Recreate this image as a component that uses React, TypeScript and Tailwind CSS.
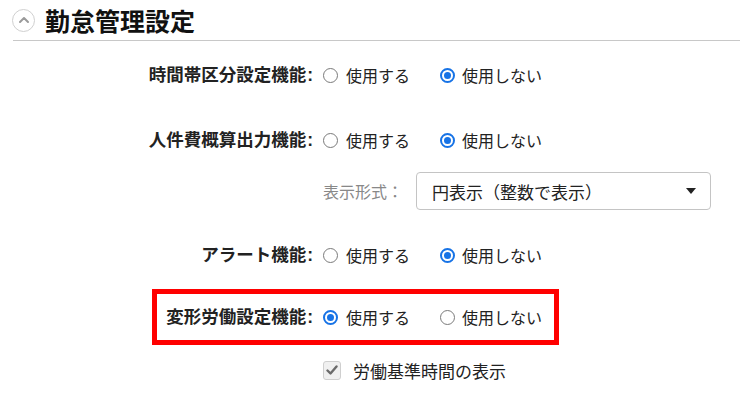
import React from "react";

const font = { fontFamily: '"Noto Sans CJK JP", "Noto Sans", sans-serif' };

function Radio({ checked }: { checked: boolean }) {
  return checked ? (
    <span className="w-[15px] h-[15px] rounded-full border-[2px] border-[#1773e6] bg-white flex items-center justify-center shrink-0">
      <span className="w-[7px] h-[7px] rounded-full bg-[#1773e6]" />
    </span>
  ) : (
    <span className="w-[15px] h-[15px] rounded-full border border-[#7a7a7a] bg-white shrink-0" />
  );
}

function RadioRow({ label, on }: { label: string; on: boolean }) {
  return (
    <div className="flex items-center h-[24px]">
      <div className="w-[313px] text-right text-[17.5px] font-bold text-[#222] leading-none">
        {label}
        <span className="ml-[1px] font-['Liberation_Sans',sans-serif]">:</span>
      </div>
      <div className="flex items-center ml-[10px] w-[117px]">
        <Radio checked={on} />
        <span className="ml-[8px] text-[16px] text-[#222] leading-none">使用する</span>
      </div>
      <div className="flex items-center">
        <Radio checked={!on} />
        <span className="ml-[7px] text-[16px] text-[#222] leading-none">使用しない</span>
      </div>
    </div>
  );
}

export default function App() {
  return (
    <div className="w-[740px] h-[406px] bg-white relative overflow-hidden" style={font}>
      <div className="ml-[13px] h-[41px] border-b border-[#c8c8c8] flex items-center">
        <span className="w-[23px] h-[23px] rounded-full border-[1.5px] border-[#d0d0d0] flex items-center justify-center -ml-[1px]">
          <svg width="12" height="8" viewBox="0 0 12 8">
            <path d="M2 6 L6 2 L10 6" fill="none" stroke="#9a9a9a" strokeWidth="2" strokeLinecap="round" strokeLinejoin="round" />
          </svg>
        </span>
        <span className="ml-[10px] text-[25px] font-bold text-[#111] leading-none">勤怠管理設定</span>
      </div>

      <div className="mt-[22px]">
        <RadioRow label="時間帯区分設定機能" on={false} />
      </div>
      <div className="mt-[41px]">
        <RadioRow label="人件費概算出力機能" on={false} />
      </div>
      <div className="mt-[20px] flex items-center h-[38px]">
        <div className="ml-[323px] text-[16px] text-[#888] leading-none">表示形式：</div>
        <div className="ml-[13px] w-[295px] h-[38px] border border-[#c4c4c4] rounded-[4px] flex items-center justify-between pl-[15px] pr-[14px]">
          <span className="text-[17px] text-[#222] leading-none">円表示（整数で表示）</span>
          <svg width="10" height="6" viewBox="0 0 10 6">
            <path d="M0 0 L10 0 L5 6 Z" fill="#222" />
          </svg>
        </div>
      </div>
      <div className="mt-[33px]">
        <RadioRow label="アラート機能" on={false} />
      </div>
      <div className="mt-[38px]">
        <RadioRow label="変形労働設定機能" on={true} />
      </div>
      <div className="mt-[29px] flex items-center h-[24px] ml-[323px]">
        <span className="w-[18px] h-[19px] rounded-[3px] border border-[#cfcfcf] bg-[#f0f0f0] flex items-center justify-center">
          <svg width="12" height="10" viewBox="0 0 12 10">
            <path d="M1.5 5.5 L4.5 8.5 L10.5 1.5" fill="none" stroke="#6b6b6b" strokeWidth="2.4" strokeLinecap="round" strokeLinejoin="round" />
          </svg>
        </span>
        <span className="ml-[12px] text-[17px] text-[#222] leading-none">労働基準時間の表示</span>
      </div>

      <div className="absolute left-[152px] top-[289px] w-[407px] h-[56px] border-[5px] border-[#ff0000] pointer-events-none" />
    </div>
  );
}
